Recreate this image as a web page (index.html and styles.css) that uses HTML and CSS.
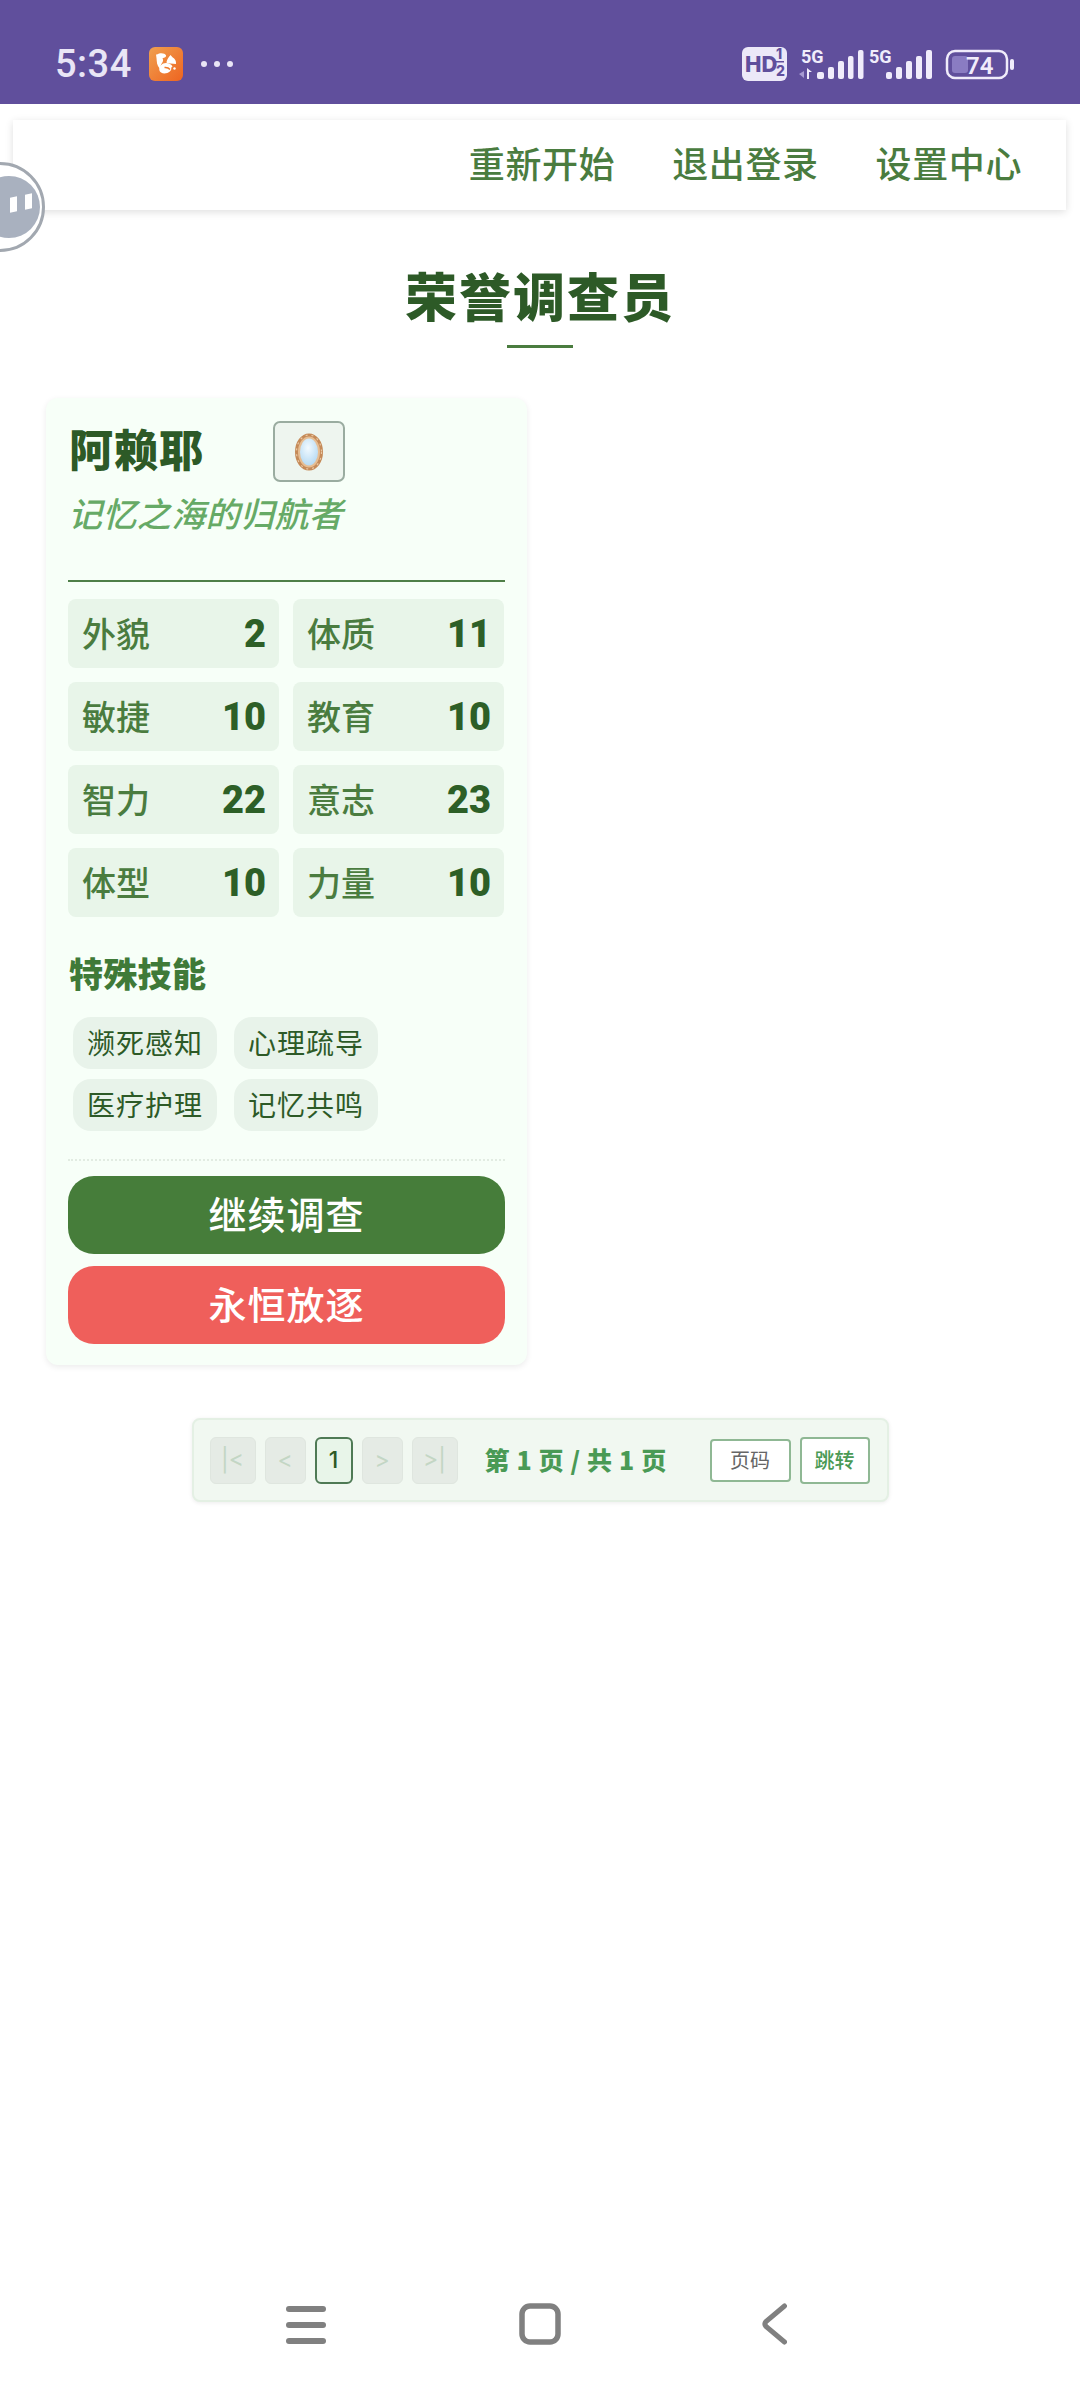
FILE: index.html
```html
<!DOCTYPE html>
<html lang="zh-CN">
<head>
<meta charset="utf-8">
<title>荣誉调查员</title>
<link rel="stylesheet" href="styles.css">
</head>
<body>
<div class="status">
  <span class="time">5:34</span>
  <svg class="app-icon" viewBox="0 0 34 34" width="34" height="34">
    <defs><linearGradient id="ag" x1="0" y1="0" x2="1" y2="1"><stop offset="0" stop-color="#f0a050"/><stop offset="1" stop-color="#ee6420"/></linearGradient></defs>
    <rect width="34" height="34" rx="6" fill="url(#ag)"/>
    <path d="M8 7.500c3-2 8-1.500 9 .8.500 1.700-1.500 2.700-3.500 2.900 1 1.800.5 3.300-.5 4.800-1.500 2-2 4.500-.5 7-3-2-4.700-5.500-4.800-9.500-.1-2.500-.5-4.500-.7-6z" fill="#fff"/>
    <path d="M21.500 8l2 2.300c2.500 1.200 3.800 3.700 3.500 6.700l-8.500-.8c-1-.3-1.200-1-.8-2 .8-2.300 2-4.400 3.800-6.200z" fill="#fff"/>
    <path d="M17 16c3 0 5.500 1.500 6.500 3.500l-1.200 1c.4 2.500-1 4.500-4 5.500-3.500 1-7.500.2-8-3-.4-3.500 2.700-7 6.700-7z" fill="#fff"/>
    <circle cx="25.500" cy="21.500" r="1.200" fill="#fff"/>
    <path d="M15.500 20.500c2.500-.3 4.300.5 5.500 2" stroke="#ef7a2c" stroke-width="1.400" fill="none"/>
  </svg>
  <span class="dots"><i></i><i></i><i></i></span>
  <svg class="status-right" viewBox="740 45 276 40" width="276" height="40">
    <rect x="742" y="47" width="45" height="34" rx="6" fill="#ece8f8"/>
    <text x="745" y="72" class="hd">HD</text>
    <text x="776" y="59" class="hd-n">1</text>
    <rect x="775" y="61" width="9" height="1.500" fill="#604f9c"/>
    <text x="776" y="76" class="hd-n">2</text>
    <text x="801" y="63" class="fiveg">5G</text>
    <path d="M799 74l5-3v7z" fill="#a79bd2"/>
    <path d="M807 68l5 4h-3v7h-2z" fill="#f0ecfb"/>
    <rect x="817" y="72" width="7" height="7" rx="2" fill="#f0ecfb"/>
    <rect x="828" y="67" width="6" height="12" rx="2" fill="#f0ecfb"/>
    <rect x="838" y="61" width="6" height="18" rx="2" fill="#f0ecfb"/>
    <rect x="848" y="56" width="5.500" height="23" rx="2" fill="#f0ecfb"/>
    <rect x="858" y="50" width="5.500" height="29" rx="2" fill="#f0ecfb"/>
    <text x="869" y="63" class="fiveg">5G</text>
    <rect x="886" y="72" width="6" height="7" rx="2" fill="#f0ecfb"/>
    <rect x="896" y="67" width="6" height="12" rx="2" fill="#f0ecfb"/>
    <rect x="906" y="61" width="6" height="18" rx="2" fill="#f0ecfb"/>
    <rect x="916" y="56" width="6" height="23" rx="2" fill="#f0ecfb"/>
    <rect x="926" y="50" width="6" height="29" rx="2" fill="#f0ecfb"/>
    <rect x="947" y="51" width="60" height="27" rx="8" fill="none" stroke="#f0ecfb" stroke-width="2.500"/>
    <rect x="952" y="56" width="16" height="17" rx="3" fill="#8a7cc2"/>
    <text x="966" y="74" class="batt">74</text>
    <rect x="1010" y="59" width="4" height="11" rx="2" fill="#f0ecfb"/>
  </svg>
</div>

<div class="float-ball"><div class="float-inner"><i class="p1"></i><i class="p2"></i></div></div>

<nav class="topnav">
  <a class="nav-link">重新开始</a>
  <a class="nav-link">退出登录</a>
  <a class="nav-link">设置中心</a>
</nav>

<h1 class="title">荣誉调查员</h1>
<div class="title-rule"></div>

<section class="card">
  <header class="card-head">
    <div class="name-row">
      <span class="name">阿赖耶</span>
      <span class="avatar">
        <svg viewBox="0 0 30 42" width="30" height="42">
          <defs><radialGradient id="mg" cx=".45" cy=".35" r=".8"><stop offset="0" stop-color="#f2faff"/><stop offset="1" stop-color="#a9d3f0"/></radialGradient></defs>
          <ellipse cx="15" cy="21" rx="12.500" ry="17" fill="#e6bd92" stroke="#c58a58" stroke-width="3"/>
          <ellipse cx="15" cy="21" rx="12.500" ry="17" fill="none" stroke="#e9c7a3" stroke-width="1.200" stroke-dasharray="2 4"/>
          <ellipse cx="15" cy="21" rx="9" ry="13.500" fill="url(#mg)"/>
        </svg>
      </span>
    </div>
    <div class="subtitle">记忆之海的归航者</div>
  </header>

  <div class="stats">
    <div class="stat"><span class="stat-k">外貌</span><span class="stat-v">2</span></div>
    <div class="stat"><span class="stat-k">体质</span><span class="stat-v">11</span></div>
    <div class="stat"><span class="stat-k">敏捷</span><span class="stat-v">10</span></div>
    <div class="stat"><span class="stat-k">教育</span><span class="stat-v">10</span></div>
    <div class="stat"><span class="stat-k">智力</span><span class="stat-v">22</span></div>
    <div class="stat"><span class="stat-k">意志</span><span class="stat-v">23</span></div>
    <div class="stat"><span class="stat-k">体型</span><span class="stat-v">10</span></div>
    <div class="stat"><span class="stat-k">力量</span><span class="stat-v">10</span></div>
  </div>

  <h2 class="section">特殊技能</h2>
  <div class="tags">
    <span class="tag">濒死感知</span>
    <span class="tag">心理疏导</span>
    <span class="tag">医疗护理</span>
    <span class="tag">记忆共鸣</span>
  </div>

  <div class="actions">
    <button class="btn btn-go">继续调查</button>
    <button class="btn btn-del">永恒放逐</button>
  </div>
</section>

<div class="pager">
  <span class="pg pg-w46 pg-off">|&lt;</span>
  <span class="pg pg-w40 pg-off">&lt;</span>
  <span class="pg pg-cur">1</span>
  <span class="pg pg-w40 pg-off">&gt;</span>
  <span class="pg pg-w46 pg-off">&gt;|</span>
  <span class="pg-info">第 1 页 / 共 1 页</span>
  <span class="pg-input">页码</span>
  <span class="pg-go">跳转</span>
</div>

<div class="gesture">
  <svg class="g-menu" viewBox="0 0 40 42" width="40" height="42"><g fill="#808080"><rect y="3" width="40" height="6" rx="3"/><rect y="19" width="40" height="6" rx="3"/><rect y="35" width="40" height="6" rx="3"/></g></svg>
  <svg class="g-home" viewBox="0 0 42 42" width="42" height="42"><rect x="3" y="3" width="36" height="36" rx="8" fill="none" stroke="#808080" stroke-width="5.500"/></svg>
  <svg class="g-back" viewBox="0 0 25 42" width="25" height="42"><path d="M22.500 3 L4 18.500 Q1.800 21 4 23.500 L22.500 39" fill="none" stroke="#808080" stroke-width="5" stroke-linecap="round"/></svg>
</div>
</body>
</html>
```
FILE: styles.css
```css
* { box-sizing: border-box; }
html, body { margin: 0; padding: 0; }
body {
  position: relative;
  width: 1080px;
  height: 2403px;
  overflow: hidden;
  background: #fff;
  display: flex;
  flex-direction: column;
  font-family: Inter, "Noto Sans CJK SC", sans-serif;
}

/* status bar */
.status {
  height: 104px;
  flex: none;
  background: #604f9c;
  display: flex;
  align-items: center;
  padding: 26px 64px 0 55px;
}
.time { font-family: Roboto, sans-serif; font-size: 38px; font-weight: 500; color: #e9e5f6; letter-spacing: .5px; width: 94px; padding-bottom: 2px; }
.app-icon { flex: none; margin-bottom: 2px; }
.dots { display: flex; gap: 7px; margin-left: 18px; margin-bottom: 2px; }
.dots i { width: 6px; height: 6px; border-radius: 50%; background: #e9e5f6; display: block; }
.status-right { margin-left: auto; flex: none; }
.hd { font: 800 22px Inter, sans-serif; fill: #604f9c; }
.hd-n { font: 800 14px Inter, sans-serif; fill: #604f9c; }
.fiveg { font: 700 18px Roboto, sans-serif; fill: #f0ecfb; }
.batt { font: 600 24px Roboto, sans-serif; fill: #f0ecfb; }

/* floating ball */
.float-ball {
  position: absolute;
  left: -45px;
  top: 162px;
  width: 90px;
  height: 90px;
  border-radius: 50%;
  background: #fff;
  border: 3px solid #a2a8b0;
  z-index: 5;
}
.float-inner {
  position: absolute;
  left: 20px;
  top: 11px;
  width: 62px;
  height: 62px;
  border-radius: 50%;
  background: #a9b1bf;
}
.float-inner i { position: absolute; width: 7px; height: 15px; background: #fff; transform: skewY(-14deg); }
.p1 { left: 32px; top: 21px; }
.p2 { left: 47px; top: 18px; }

/* top nav */
.topnav {
  flex: none;
  margin: 16px 0 0 13px;
  width: 1053px;
  height: 90px;
  background: #fff;
  box-shadow: 0 2px 8px rgba(0,0,0,.13);
  display: flex;
  justify-content: flex-end;
  align-items: center;
  gap: 57px;
  padding: 0 44px 6px 0;
}
.nav-link { font: 500 36px "Noto Sans CJK SC", sans-serif; color: #4a7c3f; line-height: 44px; letter-spacing: .6px; }

/* title */
.title {
  margin: 50px 0 0;
  text-align: center;
  font: 900 52px/70px "Noto Sans CJK SC", sans-serif;
  color: #2d5a27;
  letter-spacing: 2px;
}
.title-rule { width: 66px; height: 3px; background: #4a7c3f; margin: 15px auto 0; flex: none; }

/* card */
.card {
  flex: none;
  width: 481px;
  margin: 50px 0 0 46px;
  padding: 23px 22px 21px;
  background: #f7fff8;
  border-radius: 12px;
  box-shadow: 0 2px 6px rgba(0,0,0,.08);
}
.card-head { height: 161px; border-bottom: 2px solid #4f7f48; }
.name-row { display: flex; align-items: center; height: 61px; }
.name { font: 900 44px/61px "Noto Sans CJK SC", sans-serif; color: #2d5a27; padding-left: 1px; margin-bottom: 7px; letter-spacing: 1px; }
.avatar {
  width: 72px;
  height: 61px;
  margin-left: 69px;
  background: #eef5ef;
  border: 2px solid #9aaca0;
  border-radius: 7px;
  display: flex;
  align-items: center;
  justify-content: center;
}
.subtitle { margin-top: 8px; font: italic 500 34px/46px "Noto Sans CJK SC", sans-serif; color: #66aa66; letter-spacing: .4px; }

.stats { display: grid; grid-template-columns: 211px 211px; gap: 14px; margin-top: 17px; }
.stat {
  height: 69px;
  background: #e8f5e9;
  border-radius: 8px;
  display: flex;
  align-items: center;
  justify-content: space-between;
  padding: 0 13px 0 14px;
}
.stat-k { font: 500 34px "Noto Sans CJK SC", sans-serif; color: #4a7c3f; padding-bottom: 2px; }
.stat-v { font: 900 38px Roboto, sans-serif; color: #2d5f27; }

.section { margin: 34px 0 0; padding-left: 1px; font: 900 34px/44px "Noto Sans CJK SC", sans-serif; color: #3f7a38; letter-spacing: .3px; }
.tags { display: flex; flex-wrap: wrap; gap: 10px 17px; margin-top: 22px; padding-left: 5px; }
.tag {
  width: 144px;
  height: 52px;
  background: #e8f3ea;
  border-radius: 18px;
  display: flex;
  align-items: center;
  justify-content: center;
  font: 400 28px "Noto Sans CJK SC", sans-serif;
  letter-spacing: 1px;
  color: #2d5a27;
  padding-bottom: 2px;
}
.actions { margin-top: 28px; padding-top: 15px; border-top: 2px dotted #e2ece2; display: flex; flex-direction: column; gap: 12px; }
.btn {
  height: 78px;
  border: 0;
  border-radius: 26px;
  color: #fff;
  font: 500 38px "Noto Sans CJK SC", sans-serif;
  letter-spacing: 1px;
  padding: 0 0 5px;
}
.btn-go { background: #467d3a; }
.btn-del { background: #ef5f5b; }

/* pager */
.pager {
  flex: none;
  margin: 53px auto 0;
  width: 697px;
  height: 84px;
  background: #f1f8f1;
  border: 2px solid #e4f0e4;
  border-radius: 8px;
  box-shadow: 0 1px 4px rgba(0,0,0,.08);
  display: flex;
  align-items: center;
  padding: 0 17px 0 16px;
  font-family: Inter, "Noto Sans CJK SC", sans-serif;
}
.pg {
  height: 47px;
  border-radius: 6px;
  display: flex;
  align-items: center;
  justify-content: center;
  font-size: 23px;
  margin-right: 9px;
}
.pg-off { background: #e5ebe5; border: 1px solid #dfe6df; color: #c3d6c4; }
.pg-w46 { width: 46px; }
.pg-w40 { width: 41px; }
.pg-cur { width: 38px; background: #e8f5e9; border: 2px solid #4f7a55; color: #2d5a27; font-weight: 500; }
.pg-info { margin-left: 18px; padding-bottom: 3px; font: 900 25px "Noto Sans CJK SC", sans-serif; color: #4a9a55; white-space: pre; letter-spacing: .6px; }
.pg-input, .pg-go { display: flex; align-items: center; justify-content: center; font: 400 20px "Noto Sans CJK SC", sans-serif; background: #fff; border-radius: 4px; padding-bottom: 2px; }
.pg-input { width: 81px; height: 43px; margin-left: auto; border: 2px solid #8fb894; color: #666; }
.pg-go { width: 70px; height: 47px; margin-left: 9px; border: 2px solid #8fb894; color: #4a9a55; font-weight: 500; }

/* gesture bar */
.gesture {
  margin-top: auto;
  display: flex;
  align-items: center;
  height: 42px;
  margin-bottom: 58px;
  padding-left: 286px;
  flex: none;
}
.gesture svg { flex: none; display: block; }
.g-home { margin-left: 193px; }
.g-back { margin-left: 201px; }
```
